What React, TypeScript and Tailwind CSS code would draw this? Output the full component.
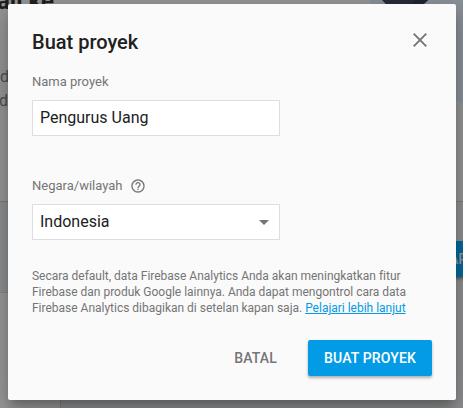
import type { ReactNode } from "react";

function Backdrop() {
  return (
    <div className="absolute inset-0 overflow-hidden bg-[#969696] text-[#4f4f4f]" aria-hidden="true">
      <svg className="absolute left-0 top-0" width="463" height="408" viewBox="0 0 463 408">
        <path d="M369 0C374 8 384 13 394 16L456 99Q460 103 463 104V0Z" fill="#8a9199" />
        <path d="M382 0Q388 8 398 8H413Q423 6 428 0Z" fill="#292b3b" />
        <path d="M403 8Q411 6 415 0H428Q423 6 413 8Z" fill="#202633" />
        <rect y="201" width="463" height="207" fill="#8d8f91" />
        <rect y="201" width="463" height="1" fill="#7b7b7b" />
        <rect x="-4" y="293" width="64" height="120" fill="#999" />
        <rect x="-4" y="292" width="64" height="1" fill="#858585" />
        <rect x="60" y="293" width="1" height="115" fill="#7f8080" />
      </svg>
      <div className="absolute -top-[13px] right-[409px] whitespace-nowrap text-[24px] leading-[28px] font-bold text-[#202020]">ali ke</div>
      <div className="absolute left-0 top-[68px] text-[16px] leading-[18px]">d</div>
      <div className="absolute -left-[1px] top-[92px] text-[16px] leading-[18px]">da</div>
      <div className="absolute left-[440px] top-[241px] flex h-9 w-24 items-center rounded-sm bg-[#056a9e] pl-[9px] text-[14px] font-medium text-[#999] shadow-[0_2px_3px_rgba(0,0,0,.35)]">
        AR
      </div>
    </div>
  );
}

function Field({ children }: { children: ReactNode }) {
  return (
    <div className="flex h-9 w-[248px] items-center justify-between border border-[#dedede] bg-white pl-[7px] pr-[10px] text-[16px] text-[#212121]">
      {children}
    </div>
  );
}

export default function App() {
  return (
    <div className="relative h-[408px] w-[463px] overflow-hidden pl-2 pt-1 font-[Roboto,sans-serif] antialiased">
      <Backdrop />
      <section
        role="dialog"
        className="relative flex h-[396px] w-[448px] flex-col rounded-[2px] bg-[#fafafa] px-6 pt-6 text-[#757575] shadow-[0_7px_8px_-4px_rgba(0,0,0,.2),0_13px_19px_2px_rgba(0,0,0,.14),0_5px_24px_4px_rgba(0,0,0,.12)]"
      >
        <header className="flex h-7 items-center justify-between">
          <h2 className="text-[20px] leading-7 font-medium text-[#212121]">Buat proyek</h2>
          <button aria-label="Tutup" className="mr-[5px] -mt-1">
            <svg width="14" height="14" viewBox="0 0 14 14" fill="none" stroke="#757575" strokeWidth="1.9">
              <path d="M.7.7 13.3 13.3M13.3.7.7 13.3" />
            </svg>
          </button>
        </header>

        <div className="mt-4 mb-2 flex h-5 items-center text-[13px]">Nama proyek</div>
        <Field>Pengurus Uang</Field>

        <div className="mt-10 mb-2 flex h-5 items-center text-[13px]">
          Negara/wilayah
          <svg className="ml-2" width="16" height="16" viewBox="0 0 24 24" fill="#757575">
            <path d="M11 18h2v-2h-2v2zm1-16C6.48 2 2 6.48 2 12s4.48 10 10 10 10-4.480 10-10S17.520 2 12 2zm0 18c-4.410 0-8-3.590-8-8s3.590-8 8-8 8 3.590 8 8-3.590 8-8 8zm0-14c-2.210 0-4 1.790-4 4h2c0-1.100.9-2 2-2s2 .9 2 2c0 2-3 1.750-3 5h2c0-2.250 3-2.500 3-5 0-2.210-1.790-4-4-4z" />
          </svg>
        </div>
        <Field>
          Indonesia
          <svg width="10" height="5" viewBox="0 0 10 5" fill="#757575">
            <path d="M0 0h10L5 5z" />
          </svg>
        </Field>

        <p className="mt-7 text-[12px] leading-4 tracking-[-0.01px] whitespace-nowrap">
          Secara default, data Firebase Analytics Anda akan meningkatkan fitur
          <br />
          Firebase dan produk Google lainnya. Anda dapat mengontrol cara data
          <br />
          Firebase Analytics dibagikan di setelan kapan saja.{" "}
          <a className="text-[#039be5] underline">Pelajari lebih lanjut</a>
        </p>

        <footer className="mt-6 flex justify-end gap-[15px] text-[14px] font-medium tracking-[0.14px]">
          <button className="h-9 px-4">BATAL</button>
          <button className="h-9 w-[124px] rounded-[2px] bg-[#039be5] text-white shadow-[0_2px_3px_rgba(0,0,0,.3)]">
            BUAT PROYEK
          </button>
        </footer>
      </section>
    </div>
  );
}
